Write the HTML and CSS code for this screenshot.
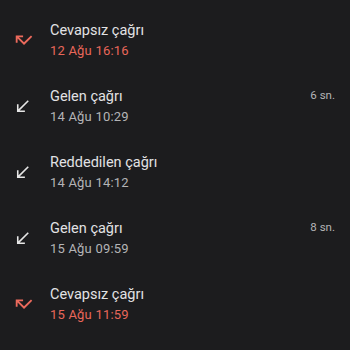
FILE: index.html
```html
<!DOCTYPE html>
<html lang="tr">
<head>
<meta charset="utf-8">
<link rel="stylesheet" href="styles.css">
</head>
<body>
<ul class="calls">
  <li class="call missed">
    <span class="icon"><svg width="22" height="22" viewBox="0 0 24 24"><path fill="currentColor" d="M19.59 7L12 14.59 6.41 9H11V7H3v8h2v-4.59l7 7 9-9z"/></svg></span>
    <div class="info"><div class="title">Cevapsız çağrı</div><div class="date">12 Ağu 16:16</div></div>
  </li>
  <li class="call">
    <span class="icon"><svg width="19" height="19" viewBox="0 0 24 24"><path fill="currentColor" d="M20 5.41L18.59 4 7 15.59V9H5v10h10v-2H8.41z"/></svg></span>
    <div class="info"><div class="title">Gelen çağrı</div><div class="date">14 Ağu 10:29</div></div>
    <span class="dur">6 sn.</span>
  </li>
  <li class="call">
    <span class="icon"><svg width="19" height="19" viewBox="0 0 24 24"><path fill="currentColor" d="M20 5.41L18.59 4 7 15.59V9H5v10h10v-2H8.41z"/></svg></span>
    <div class="info"><div class="title">Reddedilen çağrı</div><div class="date">14 Ağu 14:12</div></div>
  </li>
  <li class="call">
    <span class="icon"><svg width="19" height="19" viewBox="0 0 24 24"><path fill="currentColor" d="M20 5.41L18.59 4 7 15.59V9H5v10h10v-2H8.41z"/></svg></span>
    <div class="info"><div class="title">Gelen çağrı</div><div class="date">15 Ağu 09:59</div></div>
    <span class="dur">8 sn.</span>
  </li>
  <li class="call missed">
    <span class="icon"><svg width="22" height="22" viewBox="0 0 24 24"><path fill="currentColor" d="M19.59 7L12 14.59 6.41 9H11V7H3v8h2v-4.59l7 7 9-9z"/></svg></span>
    <div class="info"><div class="title">Cevapsız çağrı</div><div class="date">15 Ağu 11:59</div></div>
  </li>
</ul>
</body>
</html>
```
FILE: styles.css
```css
html, body {
  margin: 0;
  padding: 0;
  background: #1c1c1e;
  font-family: Roboto, "Noto Sans", sans-serif;
}
.calls {
  list-style: none;
  margin: 0;
  padding: 7px 0 0 0;
}
.call {
  display: flex;
  align-items: center;
  height: 66px;
  padding: 0 15px 0 13px;
}
.icon {
  width: 37px;
  display: flex;
  align-items: center;
  color: #e6e6e6;
}
.missed .icon {
  color: #ec6a5c;
}
.info {
  flex: 1;
  display: flex;
  flex-direction: column;
  gap: 2px;
}
.title {
  font-size: 14.5px;
  line-height: 20px;
  color: #e2e2e4;
}
.date {
  font-size: 13px;
  line-height: 16px;
  letter-spacing: 0.2px;
  color: #b4b4b6;
}
.missed .date {
  color: #e8675a;
}
.dur {
  align-self: flex-start;
  margin-top: 14px;
  font-size: 11.5px;
  line-height: 16px;
  color: #b4b4b6;
}
```
